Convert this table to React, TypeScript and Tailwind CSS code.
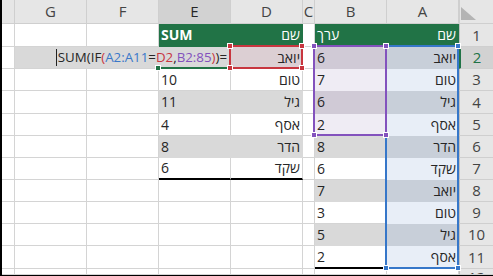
import React from "react";

// sheet data (RTL sheet drawn left-to-right as it appears)
const names = ["יואב", "טום", "גיל", "אסף", "הדר", "שקד", "יואב", "טום", "גיל", "אסף"];
const values = [6, 7, 6, 2, 8, 6, 7, 3, 5, 2];
const sums = ["", "10", "11", "4", "8", "6"];

const GRID =
  "grid grid-cols-[13px_72px_72px_72px_72px_12px_72px_72px_34px] grid-rows-[24px_23px_22px_22px_23px_22px_22px_22px_22px_22px_22px_23px_6px]";

const WHITE = "bg-white border-[#d4d4d4]";
const GRAY = "bg-[#d9d9d9] border-[#d9d9d9]";
const GREEN = "bg-[#217346] border-[#217346] text-white";
const A_DARK = "bg-[#c8cfd9] border-[#c8cfd9]";
const A_LIGHT = "bg-[#e8eef7] border-[#e8eef7]";
const B_DARK = "bg-[#d0cad6] border-[#d0cad6]";
const B_LIGHT = "bg-[#efecf4] border-[#efecf4]";
const PINK = "bg-[#dccfd3] border-[#dccfd3]";

type CellProps = {
  fill?: string;
  right?: boolean;
  thick?: boolean;
  className?: string;
  children?: React.ReactNode;
};

const Cell = ({ fill = WHITE, right, thick, className = "", children }: CellProps) => (
  <div
    className={`flex items-center overflow-hidden whitespace-nowrap border-r ${
      thick ? "border-b-2 !border-b-black" : "border-b"
    } ${right ? "justify-end pr-[2px]" : "pl-[2px]"} ${fill} ${className}`}
  >
    {children}
  </div>
);

const Head = ({ label, active }: { label?: string; active?: boolean }) => (
  <div
    className={`flex items-center justify-center border-r border-b border-[#cfcfcf] text-[15px] ${
      active ? "bg-[#d2d2d2] text-[#262626]" : "bg-[#e6e6e6] text-[#444]"
    }`}
  >
    {label}
  </div>
);

const RowHead = ({ n, active }: { n: number; active?: boolean }) => (
  <div
    className={`flex justify-center overflow-hidden border-b border-[#cfcfcf] text-[15px] ${
      n === 12 ? "items-start pt-[1px]" : "items-center"
    } ${
      active
        ? "bg-[#d2d2d2] text-[#217346] border-l-2 border-l-[#217346]"
        : "bg-[#e6e6e6] text-[#444] border-l border-l-[#bfbfbf]"
    }`}
  >
    {n}
  </div>
);

const Handle = ({ color, pos }: { color: string; pos: string }) => (
  <span className={`absolute w-[6px] h-[6px] border border-white ${color} ${pos}`} />
);

const Range = ({ area, color, bg }: { area: string; color: string; bg: string }) => (
  <div className={`relative ${area}`}>
    <div className={`absolute inset-[-2px_0_0_-2px] border-2 ${color}`}>
      <Handle color={bg} pos="left-[-4px] top-[-4px]" />
      <Handle color={bg} pos="right-[-4px] top-[-4px]" />
      <Handle color={bg} pos="left-[-4px] bottom-[-4px]" />
      <Handle color={bg} pos="right-[-4px] bottom-[-4px]" />
    </div>
  </div>
);

export default function App() {
  const rows = names.map((name, i) => {
    const row = i + 2;
    const even = row % 2 === 0;
    const inTable = row <= 7;
    return (
      <React.Fragment key={row}>
        <Cell />
        {row === 2 ? (
          <div className="col-span-3 flex items-center justify-end pr-[4px] border-b border-[#d4d4d4] bg-[#d9d9d9] whitespace-nowrap text-[13.3px]">
            <span className="w-[1px] h-[17px] bg-[#222] mr-[1px]" />
            <span className="text-[#262626]">SUM(IF</span>
            <span className="text-[#c8363f]">(</span>
            <span className="text-[#3a78c9]">A2:A11</span>
            <span className="text-[#262626]">=</span>
            <span className="text-[#c8363f]">D2</span>
            <span className="text-[#262626]">,</span>
            <span className="text-[#8352bd]">B2:85</span>
            <span className="text-[#c8363f]">)</span>
            <span className="text-[#262626]">)=</span>
          </div>
        ) : (
          <>
            <Cell />
            <Cell />
            <Cell fill={inTable ? (even ? GRAY : WHITE) : WHITE} thick={row === 7}>
              {inTable ? sums[i] : ""}
            </Cell>
          </>
        )}
        <Cell
          fill={row === 2 ? PINK : inTable ? (even ? GRAY : WHITE) : WHITE}
          right
          thick={row === 7}
        >
          {inTable ? name : ""}
        </Cell>
        <Cell />
        <Cell
          fill={row <= 5 ? (even ? B_DARK : B_LIGHT) : even ? GRAY : WHITE}
          thick={row === 11}
        >
          {values[i]}
        </Cell>
        <Cell fill={even ? A_DARK : A_LIGHT} right>
          {name}
        </Cell>
        <RowHead n={row} active={row === 2} />
      </React.Fragment>
    );
  });

  return (
    <div className="w-[493px] h-[276px] overflow-hidden bg-white border-l-2 border-b border-black font-['Open_Sans','Noto_Sans','DejaVu_Sans',sans-serif] text-[14px] text-[#262626] leading-none">
      <div className="relative">
        <div className={GRID}>
          {/* column headers */}
          <Head />
          <Head label="G" />
          <Head label="F" />
          <Head label="E" active />
          <Head label="D" />
          <Head label="C" />
          <Head label="B" />
          <Head label="A" />
          <div className="border-b border-l border-[#cfcfcf] bg-[#e6e6e6] pl-[1px] pt-[7px]">
            <svg width="15" height="13" viewBox="0 0 15 13">
              <polygon points="0,0 0,13 15,13" fill="#b4b4b4" />
            </svg>
          </div>

          {/* row 1: table headers */}
          <Cell />
          <Cell />
          <Cell />
          <Cell fill={GREEN} className="font-bold">
            SUM
          </Cell>
          <Cell fill={GREEN} right>
            שם
          </Cell>
          <Cell />
          <Cell fill={GREEN}>ערך</Cell>
          <Cell fill={GREEN} right>
            שם
          </Cell>
          <RowHead n={1} />

          {rows}

          {/* row 12, cut off */}
          <Cell />
          <Cell />
          <Cell />
          <Cell />
          <Cell />
          <Cell />
          <Cell />
          <Cell />
          <RowHead n={12} />
        </div>

        {/* reference highlights drawn over the sheet */}
        <div className={`absolute inset-0 pointer-events-none ${GRID}`}>
          <Range area="col-start-8 row-start-3 row-span-10" color="border-[#3677c9]" bg="bg-[#3677c9]" />
          <Range area="col-start-7 row-start-3 row-span-4" color="border-[#8352bd]" bg="bg-[#8352bd]" />
          <div className="relative col-start-4 row-start-3">
            <div className="absolute inset-[-2px_0_0_-2px] border-r-2 border-b-2 border-[#217346]">
              <span className="absolute left-[-2px] bottom-[-4px] w-[6px] h-[6px] border border-white bg-[#217346]" />
            </div>
          </div>
          <Range area="col-start-5 row-start-3" color="border-[#c8363f]" bg="bg-[#c8363f]" />
        </div>
      </div>
    </div>
  );
}
